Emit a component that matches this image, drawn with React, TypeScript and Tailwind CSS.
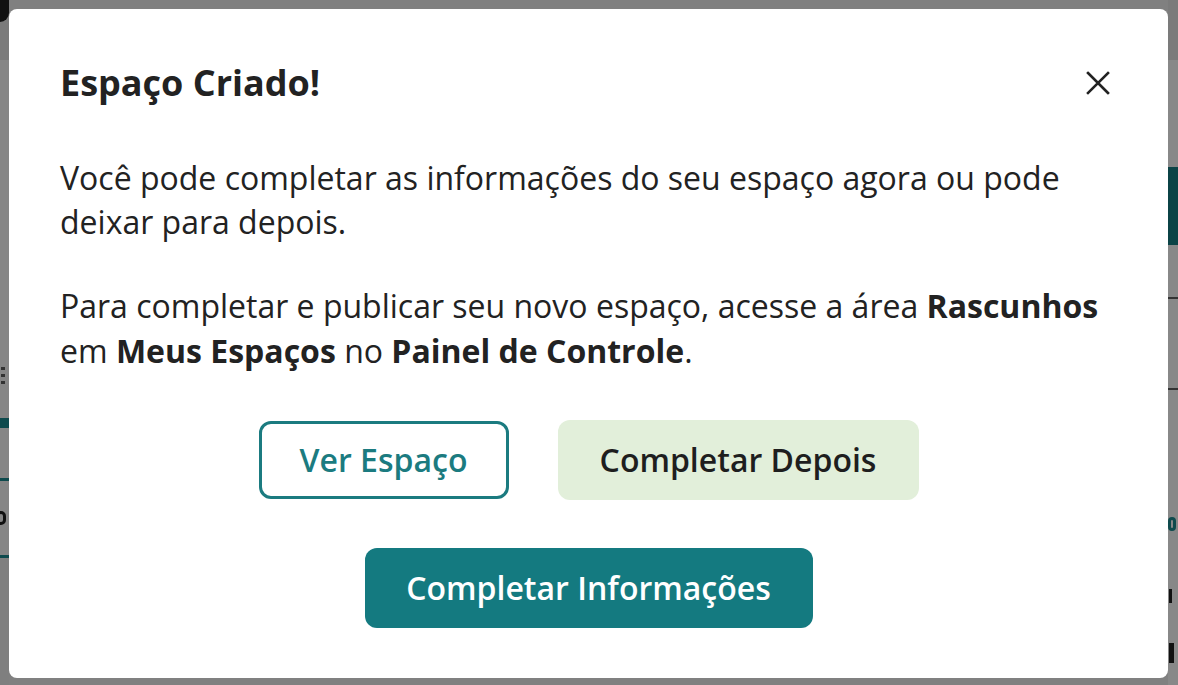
import React from 'react';

const font = { fontFamily: '"Open Sans", "Noto Sans", sans-serif' };

const CloseIcon = () => (
  <svg width="24" height="24" viewBox="0 0 24 24" fill="none">
    <path d="M2 2L22 22M22 2L2 22" stroke="#222222" strokeWidth="2.6" strokeLinecap="square" />
  </svg>
);

// page behind the overlay, only the slivers at the edges show through
const LeftStrip = () => (
  <div className="flex w-[9px] shrink-0 flex-col">
    <div className="h-[60px] bg-[#7b7b7b]">
      <div className="h-[22px] w-[9px] rounded-br-full bg-[#111]" />
    </div>
    <div className="h-[305px] bg-[#868686]" />
    <div className="flex h-[30px] flex-col gap-[4px] bg-[#868686] pl-[1px] pt-[2px]">
      <div className="h-[3px] w-[4px] bg-[#333]" />
      <div className="h-[3px] w-[4px] bg-[#333]" />
      <div className="h-[3px] w-[4px] bg-[#333]" />
    </div>
    <div className="h-[23px] bg-[#868686]" />
    <div className="h-[10px] bg-[#0e4a4d]" />
    <div className="h-[50px] bg-[#868686]" />
    <div className="h-[3px] bg-[#0e4a4d]" />
    <div className="flex h-[74px] items-center bg-[#868686]">
      <div className="ml-[-4px] h-[14px] w-[10px] rounded-full border-[3px] border-[#111]" />
    </div>
    <div className="h-[3px] bg-[#0e4a4d]" />
    <div className="flex-1 bg-[#7f7f7f]" />
  </div>
);

const RightStrip = () => (
  <div className="flex w-[10px] shrink-0 flex-col">
    <div className="h-[60px] bg-[#7b7b7b]" />
    <div className="h-[107px] bg-[#888]" />
    <div className="h-[78px] bg-[#0b4346]" />
    <div className="h-[52px] bg-[#888]" />
    <div className="h-[2px] bg-[#333]" />
    <div className="h-[89px] bg-[#888]" />
    <div className="h-[2px] bg-[#333]" />
    <div className="flex h-[143px] items-end bg-[#888] pb-[2px]">
      <div className="h-[14px] w-[8px] rounded-full border-[3px] border-[#0e4a4d]" />
    </div>
    <div className="flex flex-1 flex-col gap-[40px] bg-[#888] pl-[1px] pt-[56px]">
      <div className="h-[14px] w-[3px] bg-[#111]" />
      <div className="h-[20px] w-[5px] bg-[#111]" />
    </div>
  </div>
);

export default function App() {
  return (
    <div className="flex h-[685px] w-full overflow-hidden bg-[#808080]" style={font}>
      <LeftStrip />
      <div className="flex flex-col pt-[9px]">
        <div className="h-[669px] w-[1159px] rounded-[8px] bg-white px-[51px] pt-[50px] text-[#222]">
          <div className="flex items-center justify-between">
            <h2 className="text-[36px] font-bold leading-[48px]">Espaço Criado!</h2>
            <button className="mr-[7px] flex h-[24px] w-[24px] items-center justify-center">
              <CloseIcon />
            </button>
          </div>

          <p className="mt-[49px] text-[32px] leading-[44px]">
            Você pode completar as informações do seu espaço agora ou pode deixar para depois.
          </p>
          <p className="mt-[39px] text-[32px] leading-[45px]">
            Para completar e publicar seu novo espaço, acesse a área <b>Rascunhos</b> em{' '}
            <b>Meus Espaços</b> no <b>Painel de Controle</b>.
          </p>

          <div className="mt-[47px] flex flex-col items-center gap-[48px]">
            <div className="flex items-center gap-[49px]">
              <button className="flex h-[78px] w-[250px] items-center justify-center rounded-[12px] border-[3px] border-[#1b7b80] text-[32px] font-semibold text-[#1b7b80]">
                Ver Espaço
              </button>
              <button className="flex h-[80px] w-[361px] items-center justify-center rounded-[12px] bg-[#e2efda] text-[32px] font-semibold text-[#1e1e1e]">
                Completar Depois
              </button>
            </div>
            <button className="flex h-[80px] w-[448px] items-center justify-center rounded-[12px] bg-[#147a80] text-[32px] font-semibold text-white">
              Completar Informações
            </button>
          </div>
        </div>
      </div>
      <RightStrip />
    </div>
  );
}
